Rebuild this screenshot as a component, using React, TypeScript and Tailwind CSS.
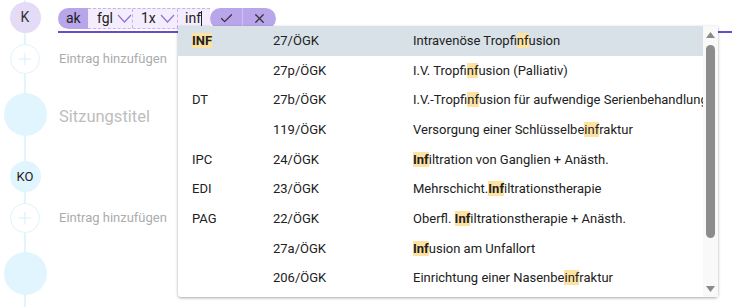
import { Check, X, Plus } from 'lucide-react'

interface Row {
  code: string
  nr: string
  pre: string
  hit: string
  post: string
  bold?: boolean
}

const rows: Row[] = [
  { code: 'INF', nr: '27/ÖGK', pre: 'Intravenöse Tropf', hit: 'inf', post: 'usion' },
  { code: '', nr: '27p/ÖGK', pre: 'I.V. Tropf', hit: 'inf', post: 'usion (Palliativ)' },
  { code: 'DT', nr: '27b/ÖGK', pre: 'I.V.-Tropf', hit: 'inf', post: 'usion für aufwendige Serienbehandlung' },
  { code: '', nr: '119/ÖGK', pre: 'Versorgung einer Schlüsselbe', hit: 'inf', post: 'raktur' },
  { code: 'IPC', nr: '24/ÖGK', pre: '', hit: 'Inf', post: 'iltration von Ganglien + Anästh.', bold: true },
  { code: 'EDI', nr: '23/ÖGK', pre: 'Mehrschicht.', hit: 'Inf', post: 'iltrationstherapie', bold: true },
  { code: 'PAG', nr: '22/ÖGK', pre: 'Oberfl. ', hit: 'Inf', post: 'iltrationstherapie + Anästh.', bold: true },
  { code: '', nr: '27a/ÖGK', pre: '', hit: 'Inf', post: 'usion am Unfallort', bold: true },
  { code: '', nr: '206/ÖGK', pre: 'Einrichtung einer Nasenbe', hit: 'inf', post: 'raktur' },
]

function Chevron() {
  return (
    <svg width="15" height="9" viewBox="0 0 15 9" className="ml-[4px]">
      <polyline points="1,1 7.5,8 14,1" fill="none" stroke="#8f72dd" strokeWidth="1.2" />
    </svg>
  )
}

function AddCircle() {
  return (
    <div className="w-[30px] h-[30px] rounded-full bg-white border border-[#dff3fc] flex items-center justify-center">
      <Plus size={20} strokeWidth={1.2} color="#d6effb" />
    </div>
  )
}

export default function App() {
  return (
    <div className="relative w-[732px] h-[307px] bg-white overflow-hidden text-[#212121]" style={{ fontFamily: 'Roboto, "Liberation Sans", sans-serif' }}>
      {/* timeline line */}
      <div className="absolute left-[24px] top-0 bottom-0 w-[2px] bg-[#e1f5fe]" />

      <div className="relative flex flex-col">
        {/* editing row */}
        <div className="flex items-center h-[31px] mt-[2px]">
          <div className="w-[50px] flex justify-center">
            <div className="w-[31px] h-[31px] rounded-full bg-[#e4dbf7] flex items-center justify-center text-[14px] text-[#333]">K</div>
          </div>
          <div className="flex-1 ml-[8px] self-stretch flex flex-col">
            <div className="flex items-center h-[21px] mt-[6px] text-[14px]">
              <div className="h-full w-[30px] pl-[8px] rounded-l-full bg-[#b9a6ea] flex items-center">ak</div>
              <div className="h-full flex items-stretch bg-[#f4edfd] border-y border-dashed border-[#c6b3ee]">
                <div className="w-[45px] pl-[9px] flex items-center border-r border-dashed border-[#c6b3ee]">
                  fgl<Chevron />
                </div>
                <div className="w-[45px] pl-[8px] flex items-center border-r border-dashed border-[#c6b3ee]">
                  1x<Chevron />
                </div>
                <div className="w-[32px] pl-[7px] flex items-center">
                  inf<span className="w-px h-[16px] bg-[#222]" />
                </div>
              </div>
              <div className="h-full w-[33px] bg-[#b9a6ea] rounded-l-full flex items-center justify-center border-r border-[#cfc2f2]">
                <Check size={15} strokeWidth={2} color="#333" />
              </div>
              <div className="h-full w-[33px] bg-[#b9a6ea] rounded-r-full flex items-center justify-center">
                <X size={15} strokeWidth={2} color="#333" />
              </div>
            </div>
            <div className="mt-[2px] h-[1.5px] bg-[#6a4cc8]" />
          </div>
        </div>

        <div className="flex items-center h-[30px] mt-[11px]">
          <div className="w-[50px] flex justify-center">
            <AddCircle />
          </div>
          <div className="ml-[9px] text-[13px] text-[#acacac]">Eintrag hinzufügen</div>
        </div>

        <div className="flex items-center h-[43px] mt-[19px]">
          <div className="w-[50px] flex justify-center">
            <div className="w-[43px] h-[43px] rounded-full bg-[#e1f5fe]" />
          </div>
          <div className="ml-[9px] mt-[6px] text-[16.5px] text-[#bdbdbd]">Sitzungstitel</div>
        </div>

        <div className="flex items-center h-[31px] mt-[25px]">
          <div className="w-[50px] flex justify-center">
            <div className="w-[31px] h-[31px] rounded-full bg-[#e1f5fe] flex items-center justify-center text-[13px] text-[#222]">KO</div>
          </div>
        </div>

        <div className="flex items-center h-[30px] mt-[11px]">
          <div className="w-[50px] flex justify-center">
            <AddCircle />
          </div>
          <div className="ml-[9px] text-[13px] text-[#acacac]">Eintrag hinzufügen</div>
        </div>

        <div className="flex items-center h-[43px] mt-[19px]">
          <div className="w-[50px] flex justify-center">
            <div className="w-[43px] h-[43px] rounded-full bg-[#e1f5fe]" />
          </div>
        </div>
      </div>

      {/* dropdown */}
      <div className="absolute left-[178px] top-[26px] w-[540px] h-[271px] bg-white rounded-b-[3px] shadow-[0_1px_3px_rgba(0,0,0,0.35)] flex">
        <div className="flex-1 min-w-0 flex flex-col text-[13px]">
          {rows.map((r, i) => (
            <div key={i} className={`h-[29.67px] flex items-center whitespace-nowrap overflow-hidden ${i === 0 ? 'bg-[#d8e1e8]' : ''}`}>
              <div className="w-[95px] pl-[14px] shrink-0">
                {r.code === 'INF' ? <span className="bg-[#fde2a1] font-bold">INF</span> : r.code}
              </div>
              <div className="w-[140px] shrink-0">{r.nr}</div>
              <div className="shrink-0">
                {r.pre}
                <span className={`bg-[#fde2a1] ${r.bold ? 'font-bold' : ''}`}>{r.hit}</span>
                {r.post}
              </div>
            </div>
          ))}
        </div>
        <div className="w-[15px] shrink-0 bg-[#f9f9f9] flex flex-col items-center pt-[6px] pb-[5px]">
          <svg width="9" height="6" viewBox="0 0 9 6"><polygon points="0,6 4.5,0 9,6" fill="#8a8a8a" /></svg>
          <div className="mt-[7px] w-[9px] h-[193px] rounded-full bg-[#8c8c8c]" />
          <div className="flex-1" />
          <svg width="9" height="6" viewBox="0 0 9 6"><polygon points="0,0 9,0 4.5,6" fill="#8a8a8a" /></svg>
        </div>
      </div>
    </div>
  )
}
